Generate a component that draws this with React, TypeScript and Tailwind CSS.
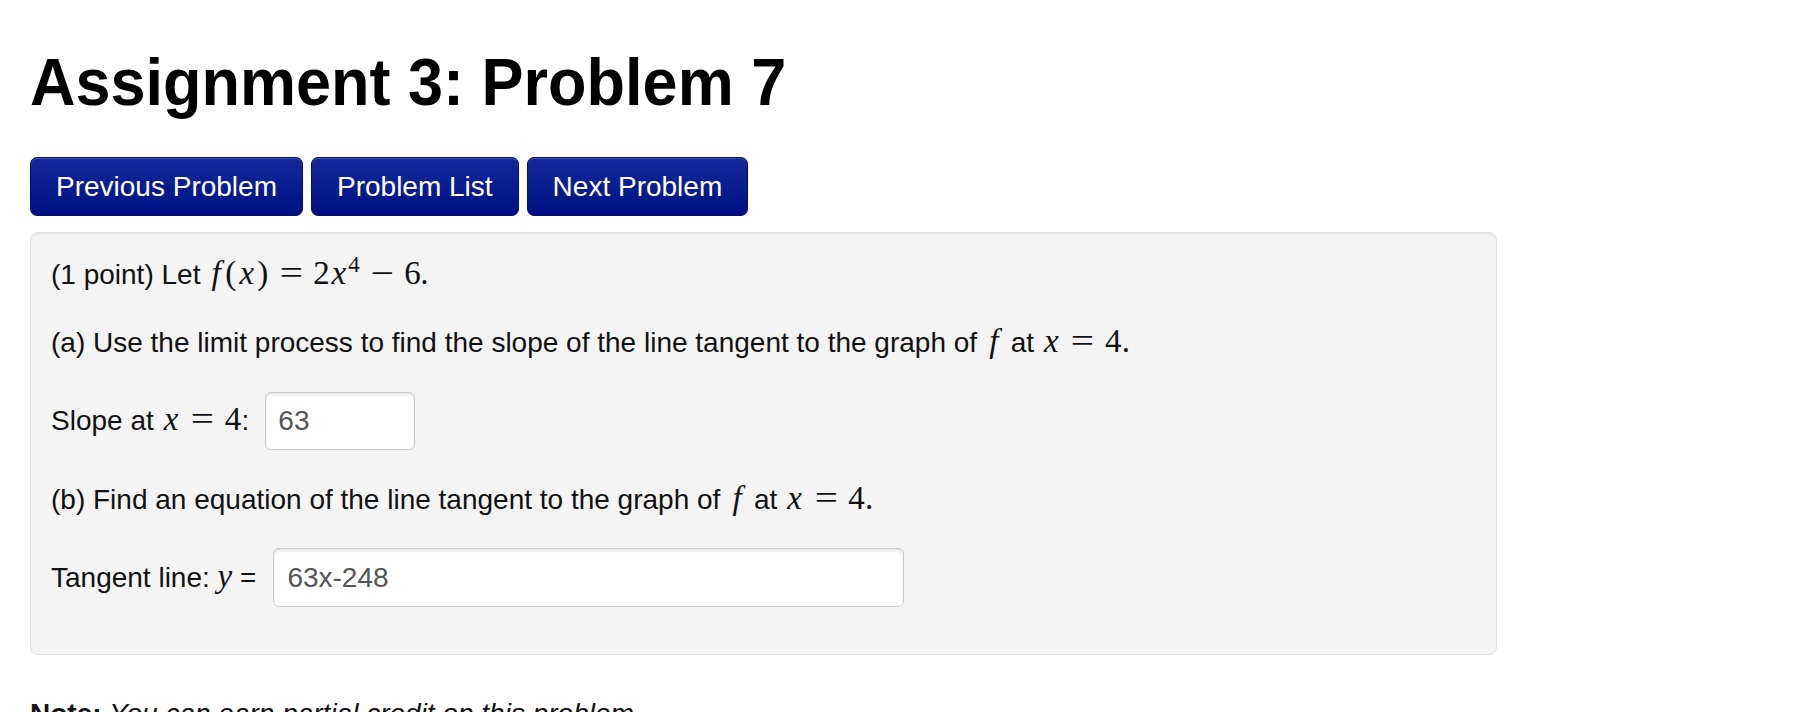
import React from "react";

const mathCls = "font-['Liberation_Serif','Times_New_Roman',serif] text-[33px] leading-none";

function Btn({ children }: { children: React.ReactNode }) {
  return (
    <button className="h-[59px] px-[25px] rounded-[7px] border border-[#000d63] bg-linear-to-b from-[#15299d] to-[#000f80] text-white text-[28px] leading-[40px] shadow-[inset_0_1px_0_rgba(255,255,255,0.18)] whitespace-nowrap">
      {children}
    </button>
  );
}

function Eq() {
  return (
    <span className="inline-block w-[44px] text-center">
      <span className="inline-block scale-x-[1.25]">=</span>
    </span>
  );
}

export default function App() {
  return (
    <div className="min-h-screen bg-white font-['Liberation_Sans',Arial,Helvetica,sans-serif] text-[#111] px-[30px] pt-[50px]">
      <h1 className="text-[63px] leading-[63px] font-bold text-black whitespace-nowrap scale-y-[1.07] origin-center">
        Assignment 3: Problem 7
      </h1>

      <div className="mt-[44px] flex gap-2">
        <Btn>Previous Problem</Btn>
        <Btn>Problem List</Btn>
        <Btn>Next Problem</Btn>
      </div>

      <div className="mt-[16px] w-[1467px] rounded-[8px] border border-[#e0e0e0] bg-[#f4f4f4] shadow-[inset_0_2px_2px_rgba(0,0,0,0.04)] px-[20px] pt-[22px] pb-[47px] text-[28px] leading-[40px]">
        <p className="h-[40px] whitespace-nowrap">
          (1 point) Let{" "}
          <span className={mathCls}>
            <span className="inline-block w-[16px] text-center italic">f</span>
            <span className="inline-block w-[13px] text-center">(</span>
            <span className="inline-block w-[19px] text-center italic">x</span>
            <span className="inline-block w-[13px] text-center">)</span>
            <Eq />
            <span className="inline-block w-[16px] text-center">2</span>
            <span className="inline-block w-[19px] text-center italic">x</span>
            <span className="relative -top-[12px] inline-block w-[12px] text-[23px]">4</span>
            <span className="inline-block w-[44px] text-center">
              <span className="inline-block scale-x-[1.25]">−</span>
            </span>
            <span className="inline-block w-[16px] text-center">6</span>
            <span className="inline-block">.</span>
          </span>
        </p>

        <p className="mt-[28px] h-[40px] whitespace-nowrap">
          (a) Use the limit process to find the slope of the line tangent to the graph of{" "}
          <span className={mathCls}>
            <span className="inline-block w-[18px] text-center italic">f</span>
          </span>{" "}
          at{" "}
          <span className={mathCls}>
            <span className="inline-block w-[19px] text-center italic">x</span>
            <Eq />
            <span className="inline-block w-[17px] text-center">4</span>
            <span className="inline-block">.</span>
          </span>
        </p>

        <div className="mt-[29px] h-[58px] flex items-center whitespace-nowrap">
          <span>
            Slope at{" "}
            <span className={mathCls}>
              <span className="inline-block w-[19px] text-center italic">x</span>
              <Eq />
              <span className="inline-block w-[17px] text-center">4</span>
            </span>
            :
          </span>
          <input
            readOnly
            value="63"
            className="ml-[16px] h-[58px] w-[150px] rounded-[6px] border border-[#cccccc] bg-white px-[12px] text-[28px] text-[#555] shadow-[inset_0_2px_3px_rgba(0,0,0,0.1)] outline-none font-['Liberation_Sans',Arial,sans-serif]"
          />
        </div>

        <p className="mt-[30px] h-[40px] whitespace-nowrap">
          (b) Find an equation of the line tangent to the graph of{" "}
          <span className={mathCls}>
            <span className="inline-block w-[18px] text-center italic">f</span>
          </span>{" "}
          at{" "}
          <span className={mathCls}>
            <span className="inline-block w-[19px] text-center italic">x</span>
            <Eq />
            <span className="inline-block w-[17px] text-center">4</span>
            <span className="inline-block">.</span>
          </span>
        </p>

        <div className="mt-[28px] h-[59px] flex items-center whitespace-nowrap">
          <span>
            Tangent line: <span className={mathCls + " italic"}>y</span> =
          </span>
          <input
            readOnly
            value="63x-248"
            className="ml-[17px] h-[59px] w-[631px] rounded-[6px] border border-[#cccccc] bg-white px-[13px] text-[28px] text-[#555] shadow-[inset_0_2px_3px_rgba(0,0,0,0.1)] outline-none font-['Liberation_Sans',Arial,sans-serif]"
          />
        </div>
      </div>

      <p className="mt-[39px] text-[28px] leading-[40px] whitespace-nowrap">
        <b className="font-bold">Note:</b> <i>You can earn partial credit on this problem.</i>
      </p>
    </div>
  );
}
